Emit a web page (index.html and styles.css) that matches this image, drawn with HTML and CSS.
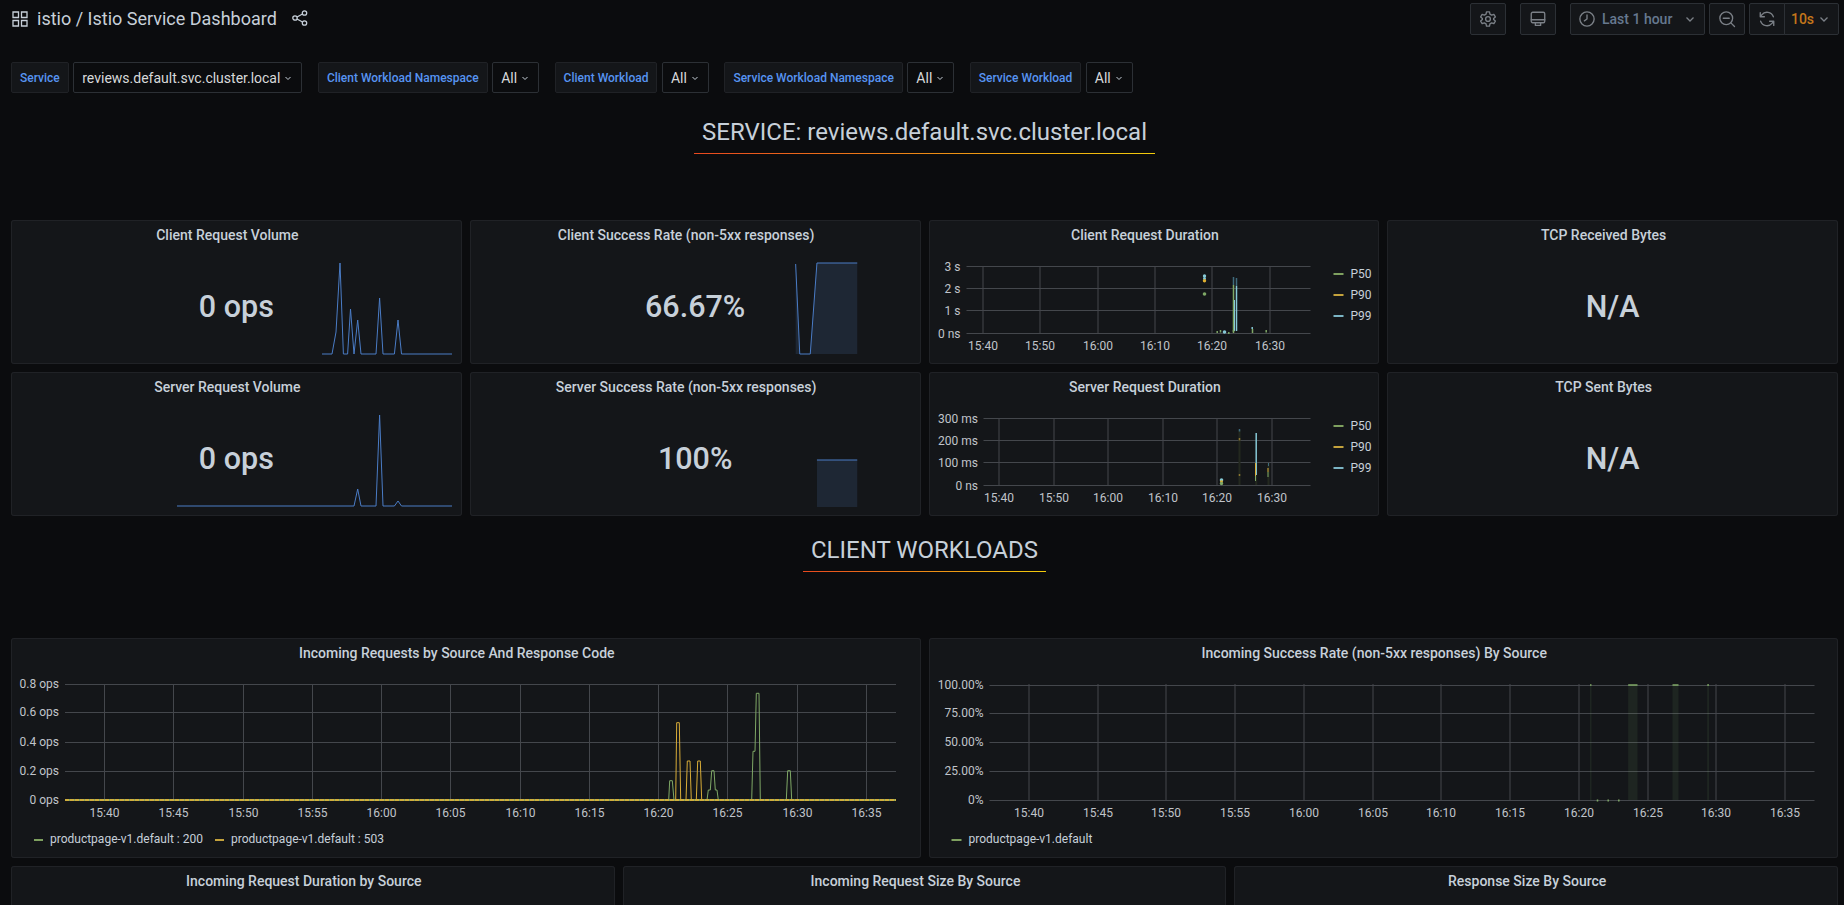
FILE: index.html
```html
<!DOCTYPE html>
<html lang="en">
<head>
<meta charset="utf-8">
<title>Istio Service Dashboard</title>
<link rel="stylesheet" href="styles.css">
</head>
<body>
<header class="topbar">
  <svg class="ico-apps" viewBox="0 0 16 16"><path d="M1 1h5.500v5.500H1zM9.500 1H15v5.500H9.500zM1 9.500h5.500V15H1zM9.500 9.500H15V15H9.500z"/></svg>
  <h1 class="dash-title">istio / Istio Service Dashboard</h1>
  <svg class="ico-share" viewBox="0 0 16 16"><circle cx="3" cy="8" r="2.200"/><circle cx="12.500" cy="3" r="2.200"/><circle cx="12.500" cy="13" r="2.200"/><path d="M5 7l5.500-3M5 9l5.500 3"/></svg>
  <div class="spacer"></div>
  <button class="tbtn tbtn-square tbtn-gap-l">
    <svg class="ico" viewBox="0 0 24 24"><circle cx="12" cy="12" r="3.200"/><path d="M10 2.500h4l.6 3 2.300 1.300 2.900-1 2 3.400-2.300 2a7 7 0 0 1 0 1.600l2.300 2-2 3.400-2.900-1-2.300 1.300-.6 3h-4l-.6-3-2.300-1.300-2.900 1-2-3.400 2.300-2a7 7 0 0 1 0-1.600l-2.300-2 2-3.400 2.900 1 2.300-1.300z"/></svg>
  </button>
  <button class="tbtn tbtn-square tbtn-gap-l">
    <svg class="ico" viewBox="0 0 24 24"><rect x="3" y="3" width="18" height="14" rx="2"/><path d="M3 13h18M8.500 17v3.500h7V17"/></svg>
  </button>
  <button class="tbtn tbtn-time">
    <svg class="ico" viewBox="0 0 24 24"><circle cx="12" cy="12" r="9.500"/><path d="M12 6.500V12l-3.500 2.500"/></svg>
    <span class="time-label">Last 1 hour</span>
    <svg class="chev" viewBox="0 0 12 12"><path d="M2.500 4.500L6 8l3.500-3.500"/></svg>
  </button>
  <button class="tbtn tbtn-square tbtn-gap-s">
    <svg class="ico" viewBox="0 0 24 24"><circle cx="11" cy="11" r="8.500"/><path d="M7 11h8M17.500 17.500l4.500 4.500"/></svg>
  </button>
  <div class="refresh-group">
    <button class="tbtn tbtn-square tbtn-join-l">
      <svg class="ico" viewBox="0 0 24 24"><path d="M20.500 9A9 9 0 0 0 5 6.500L3 9M3.500 15A9 9 0 0 0 19 17.500l2 -2.500M3 3.500V9h5.500M21 20.500V15h-5.500"/></svg>
    </button>
    <button class="tbtn tbtn-join-r">
      <span class="refresh-val">10s</span>
      <svg class="chev" viewBox="0 0 12 12"><path d="M2.500 4.500L6 8l3.500-3.500"/></svg>
    </button>
  </div>
</header>

<section class="filters">
  <div class="f-group"><span class="f-label">Service</span><span class="f-select">reviews.default.svc.cluster.local<svg class="chev-s" viewBox="0 0 10 10"><path d="M2.500 4L5 6.500 7.500 4"/></svg></span></div>
  <div class="f-group"><span class="f-label">Client Workload Namespace</span><span class="f-select">All<svg class="chev-s" viewBox="0 0 10 10"><path d="M2.500 4L5 6.500 7.500 4"/></svg></span></div>
  <div class="f-group"><span class="f-label">Client Workload</span><span class="f-select">All<svg class="chev-s" viewBox="0 0 10 10"><path d="M2.500 4L5 6.500 7.500 4"/></svg></span></div>
  <div class="f-group"><span class="f-label">Service Workload Namespace</span><span class="f-select">All<svg class="chev-s" viewBox="0 0 10 10"><path d="M2.500 4L5 6.500 7.500 4"/></svg></span></div>
  <div class="f-group"><span class="f-label">Service Workload</span><span class="f-select">All<svg class="chev-s" viewBox="0 0 10 10"><path d="M2.500 4L5 6.500 7.500 4"/></svg></span></div>
</section>

<main class="dashboard">
  <div class="text-panel span-24"><h2 class="section-title">SERVICE: reviews.default.svc.cluster.local</h2></div>

  <article class="panel span-6">
    <h3 class="panel-title">Client Request Volume</h3>
    <div class="stat-value">0 ops</div>
    <svg class="chart" viewBox="11 248 450.750 116">
      <path class="spark" d="M322 354H332L336 332L340 263L343.400 354H347.600L350.500 309L354 354L357.700 320L361 354H376L379.600 298L383 354H394.400L398 320L401.500 354H452"/>
    </svg>
  </article>
  <article class="panel span-6">
    <h3 class="panel-title">Client Success Rate (non-5xx responses)</h3>
    <div class="stat-value">66.67%</div>
    <svg class="chart" viewBox="469.750 248 450.750 116">
      <path class="spark-fill" d="M795.400 264L799.500 354H795.400zM810 354L816.700 263H857V354z"/>
      <path class="spark" d="M795.400 264L799.500 354H810L816.700 263H857"/>
    </svg>
  </article>
  <article class="panel span-6">
    <h3 class="panel-title">Client Request Duration</h3>
    <svg class="chart" viewBox="928.500 248 450.750 116">
      <path class="grid" d="M966 266.500H1310M966 288.500H1310M966 310.500H1310M966 333.500H1310M982.500 266V333M1039.500 266V333M1097.500 266V333M1154.500 266V333M1211.500 266V333M1269.500 266V333"/>
      <text class="axis end" x="960" y="270.500">3 s</text>
      <text class="axis end" x="960" y="292.500">2 s</text>
      <text class="axis end" x="960" y="314.500">1 s</text>
      <text class="axis end" x="960" y="337.500">0 ns</text>
      <text class="axis mid" x="982.500" y="350">15:40</text>
      <text class="axis mid" x="1039.500" y="350">15:50</text>
      <text class="axis mid" x="1097.500" y="350">16:00</text>
      <text class="axis mid" x="1154.500" y="350">16:10</text>
      <text class="axis mid" x="1211.500" y="350">16:20</text>
      <text class="axis mid" x="1269.500" y="350">16:30</text>
      <path class="s-blue-soft w2" d="M1233 277V285M1236 278V286"/>
      <path class="s-green w2" d="M1233 285V332"/>
      <path class="s-blue w2" d="M1236 286V331"/>
      <path class="s-blue w1" d="M1234 300V331"/>
      <path class="s-blue w2" d="M1251.700 327V329"/>
      <path class="s-green w2" d="M1252 329V333M1265.700 330V332.500M1216.700 331V333M1220 330V332.500M1228.300 332V334M1233 330V333"/>
      <circle class="f-blue" cx="1224" cy="332" r="1.800"/>
      <circle class="f-blue" cx="1204" cy="276" r="1.700"/><circle class="f-blue" cx="1204" cy="278.500" r="1.500"/>
      <circle class="f-yellow" cx="1204" cy="280.800" r="1.700"/>
      <circle class="f-green" cx="1204" cy="294" r="1.800"/>
      <path class="swatch-g" d="M1333 274H1343"/><text class="legend" x="1350" y="278">P50</text>
      <path class="swatch-y" d="M1333 295H1343"/><text class="legend" x="1350" y="299">P90</text>
      <path class="swatch-b" d="M1333 316H1343"/><text class="legend" x="1350" y="320">P99</text>
    </svg>
  </article>
  <article class="panel span-6">
    <h3 class="panel-title">TCP Received Bytes</h3>
    <div class="stat-value">N/A</div>
  </article>

  <article class="panel span-6">
    <h3 class="panel-title">Server Request Volume</h3>
    <div class="stat-value">0 ops</div>
    <svg class="chart" viewBox="11 400 450.750 116">
      <path class="spark" d="M177 506H354L357.700 489L361 506H376L379.600 415L383 506H394.400L398 501L401.500 506H452"/>
    </svg>
  </article>
  <article class="panel span-6">
    <h3 class="panel-title">Server Success Rate (non-5xx responses)</h3>
    <div class="stat-value">100%</div>
    <svg class="chart" viewBox="469.750 400 450.750 116">
      <rect class="spark-fill" x="816.700" y="460" width="40.300" height="47"/>
      <path class="spark" d="M816.700 460H857"/>
    </svg>
  </article>
  <article class="panel span-6">
    <h3 class="panel-title">Server Request Duration</h3>
    <svg class="chart" viewBox="928.500 400 450.750 116">
      <path class="grid" d="M983 418.500H1310M983 440.500H1310M983 462.500H1310M983 485.500H1310M998.500 418V485M1053.500 418V485M1107.500 418V485M1162.500 418V485M1216.500 418V485M1271.500 418V485"/>
      <text class="axis end" x="977.500" y="422.500">300 ms</text>
      <text class="axis end" x="977.500" y="444.500">200 ms</text>
      <text class="axis end" x="977.500" y="466.500">100 ms</text>
      <text class="axis end" x="977.500" y="489.500">0 ns</text>
      <text class="axis mid" x="998.500" y="502">15:40</text>
      <text class="axis mid" x="1053.500" y="502">15:50</text>
      <text class="axis mid" x="1107.500" y="502">16:00</text>
      <text class="axis mid" x="1162.500" y="502">16:10</text>
      <text class="axis mid" x="1216.500" y="502">16:20</text>
      <text class="axis mid" x="1271.500" y="502">16:30</text>
      <path class="s-band" d="M1239 430V485M1255.700 462V485M1268 463V485"/>
      <path class="s-blue-soft w2" d="M1239 429V431.500"/>
      <path class="s-yellow-soft w2" d="M1239 438V440.500M1239 474V476"/>
      <path class="s-blue w2" d="M1255.700 433V475"/>
      <path class="s-yellow w1" d="M1255 463V476"/>
      <path class="s-green w1" d="M1255 476V481M1267.500 472V477"/>
      <path class="s-yellow w1" d="M1267.500 468V472"/>
      <path class="s-blue-soft w1" d="M1268 463V466"/>
      <circle class="f-blue" cx="1221" cy="480" r="1.800"/>
      <circle class="f-yellow" cx="1221" cy="481.700" r="1.400"/>
      <circle class="f-green" cx="1221" cy="483.500" r="1.700"/>
      <path class="swatch-g" d="M1333 426H1343"/><text class="legend" x="1350" y="430">P50</text>
      <path class="swatch-y" d="M1333 447H1343"/><text class="legend" x="1350" y="451">P90</text>
      <path class="swatch-b" d="M1333 468H1343"/><text class="legend" x="1350" y="472">P99</text>
    </svg>
  </article>
  <article class="panel span-6">
    <h3 class="panel-title">TCP Sent Bytes</h3>
    <div class="stat-value">N/A</div>
  </article>

  <div class="text-panel span-24"><h2 class="section-title">CLIENT WORKLOADS</h2></div>

  <article class="panel span-12">
    <h3 class="panel-title">Incoming Requests by Source And Response Code</h3>
    <svg class="chart" viewBox="11 666 909.500 192">
      <path class="grid" d="M65 684.500H896M65 712.500H896M65 742.500H896M65 771.500H896M104.500 684V800M173.500 684V800M243.500 684V800M312.500 684V800M381.500 684V800M450.500 684V800M520.500 684V800M589.500 684V800M658.500 684V800M727.500 684V800M797.500 684V800M866.500 684V800"/>
      <text class="axis end" x="59" y="688">0.8 ops</text>
      <text class="axis end" x="59" y="716">0.6 ops</text>
      <text class="axis end" x="59" y="746">0.4 ops</text>
      <text class="axis end" x="59" y="775">0.2 ops</text>
      <text class="axis end" x="59" y="804">0 ops</text>
      <text class="axis mid" x="104.500" y="817">15:40</text>
      <text class="axis mid" x="173.500" y="817">15:45</text>
      <text class="axis mid" x="243.500" y="817">15:50</text>
      <text class="axis mid" x="312.500" y="817">15:55</text>
      <text class="axis mid" x="381.500" y="817">16:00</text>
      <text class="axis mid" x="450.500" y="817">16:05</text>
      <text class="axis mid" x="520.500" y="817">16:10</text>
      <text class="axis mid" x="589.500" y="817">16:15</text>
      <text class="axis mid" x="658.500" y="817">16:20</text>
      <text class="axis mid" x="727.500" y="817">16:25</text>
      <text class="axis mid" x="797.500" y="817">16:30</text>
      <text class="axis mid" x="866.500" y="817">16:35</text>
      <path class="s-green w1" d="M668.700 800L669.700 780.700H672.300L674 800M707 800L708.300 790H710.300L711.700 770.700H714L715.300 790H717L718.300 800M751.700 800L753 751.300H755L756.300 693.300H759L760.300 800M786.300 800L787.700 770.700H790.300L791.700 800"/>
      <path class="s-yellow w1" d="M675.700 800L676.700 722.700H679.300L680.700 800M686 800L687.300 761H690L691.300 800M696.300 800L697.700 761H700.300L701.700 800"/>
      <path class="base-g" d="M65 800H896"/>
      <path class="base-y" d="M65 800H896"/>
      <path class="swatch-g" d="M34 840H43"/><text class="legend" x="50" y="843">productpage-v1.default : 200</text>
      <path class="swatch-y" d="M215 840H224"/><text class="legend" x="231" y="843">productpage-v1.default : 503</text>
    </svg>
  </article>
  <article class="panel span-12">
    <h3 class="panel-title">Incoming Success Rate (non-5xx responses) By Source</h3>
    <svg class="chart" viewBox="928.500 666 909.500 192">
      <path class="grid" d="M989 685.500H1814M989 713.500H1814M989 742.500H1814M989 771.500H1814M989 800.500H1814M1028.500 684V800M1097.500 684V800M1165.500 684V800M1234.500 684V800M1303.500 684V800M1372.500 684V800M1440.500 684V800M1509.500 684V800M1578.500 684V800M1647.500 684V800M1715.500 684V800M1784.500 684V800"/>
      <text class="axis end" x="983" y="689">100.00%</text>
      <text class="axis end" x="983" y="717">75.00%</text>
      <text class="axis end" x="983" y="746">50.00%</text>
      <text class="axis end" x="983" y="775">25.00%</text>
      <text class="axis end" x="983" y="804">0%</text>
      <text class="axis mid" x="1028.500" y="817">15:40</text>
      <text class="axis mid" x="1097.500" y="817">15:45</text>
      <text class="axis mid" x="1165.500" y="817">15:50</text>
      <text class="axis mid" x="1234.500" y="817">15:55</text>
      <text class="axis mid" x="1303.500" y="817">16:00</text>
      <text class="axis mid" x="1372.500" y="817">16:05</text>
      <text class="axis mid" x="1440.500" y="817">16:10</text>
      <text class="axis mid" x="1509.500" y="817">16:15</text>
      <text class="axis mid" x="1578.500" y="817">16:20</text>
      <text class="axis mid" x="1647.500" y="817">16:25</text>
      <text class="axis mid" x="1715.500" y="817">16:30</text>
      <text class="axis mid" x="1784.500" y="817">16:35</text>
      <path class="fill-g" d="M1589.500 685h1.500V800h-1.500zM1627.700 685h9.300V800h-9.300zM1672 685h6V800h-6zM1706.700 685h1.800V800h-1.800z"/>
      <path class="s-green w2" d="M1589.500 685h1.500M1627.700 685h9.300M1672 685h6M1706.700 685h1.800M1597 799.500v2M1607.700 799.500v2M1618.300 799.500v2"/>
      <path class="swatch-g" d="M951 840H961"/><text class="legend" x="968" y="843">productpage-v1.default</text>
    </svg>
  </article>

  <article class="panel span-8"><h3 class="panel-title">Incoming Request Duration by Source</h3></article>
  <article class="panel span-8"><h3 class="panel-title">Incoming Request Size By Source</h3></article>
  <article class="panel span-8"><h3 class="panel-title">Response Size By Source</h3></article>
</main>
</body>
</html>
```
FILE: styles.css
```css
* { box-sizing: border-box; }
html, body { margin: 0; height: 905px; overflow: hidden; }
body {
  background: #0b0c0e;
  color: #c7d0d9;
  font-family: Roboto, "Noto Sans", sans-serif;
  font-size: 14px;
}

/* top bar */
.topbar { display: flex; align-items: center; height: 34px; margin-top: 2px; padding: 0 5px 0 12px; }
.ico-apps { width: 16px; height: 16px; fill: none; stroke: #c7d0d9; stroke-width: 1.3; }
.dash-title { margin: 0 0 0 9px; font-size: 18px; font-weight: 400; color: #c7d0d9; position: relative; top: -1px; }
.ico-share { width: 16px; height: 16px; margin-left: 15px; fill: none; stroke: #c7d0d9; stroke-width: 1.3; position: relative; top: -1px; }
.spacer { flex: 1; }
.tbtn {
  display: flex; align-items: center; justify-content: center; height: 32px; padding: 0;
  background: #141619; border: 1px solid #2c3035; border-radius: 2px;
  color: #7b8087; font-family: inherit; font-size: 14px;
}
.tbtn-square { width: 36px; }
.tbtn-gap-l { margin-right: 14px; }
.tbtn-gap-s { margin: 0 4px; }
.tbtn-time { width: 135px; justify-content: flex-start; padding: 0 8px 0 7px; }
.ico { width: 18px; height: 18px; fill: none; stroke: #7b8087; stroke-width: 1.8; stroke-linecap: round; stroke-linejoin: round; }
.time-label { margin-left: 6px; color: #66788f; font-weight: 500; flex: 1; text-align: left; }
.chev { width: 12px; height: 12px; fill: none; stroke: #7b8087; stroke-width: 1.3; }
.refresh-group { display: flex; }
.tbtn-join-l { border-radius: 2px 0 0 2px; }
.tbtn-join-r { width: 55px; margin-left: -1px; border-radius: 0 2px 2px 0; gap: 4px; padding-right: 2px; }
.refresh-val { color: #c4761b; font-weight: 500; }

/* variable filters */
.filters { display: flex; margin-top: 26px; padding-left: 11px; gap: 15.5px; height: 31px; }
.f-group { display: flex; gap: 4.5px; }
.f-label {
  display: flex; align-items: center; padding: 0 8px;
  background: #141619; border: 1px solid #202226; border-radius: 2px;
  color: #5794f2; font-size: 12px; font-weight: 500;
}
.f-select {
  display: flex; align-items: center; padding: 0 8px;
  background: #0b0c0e; border: 1px solid #2c3035; border-radius: 2px;
  color: #d8d9da; font-size: 14px;
}
.chev-s { width: 10px; height: 10px; margin-left: 3px; fill: none; stroke: #c7d0d9; stroke-width: 1; }

/* grid */
.dashboard {
  display: grid;
  grid-template-columns: repeat(24, 1fr);
  grid-template-rows: 106px 144px 144px 106px 220px 144px;
  column-gap: 8px;
  row-gap: 8px;
  margin-top: 13px;
  padding: 0 6px 0 11px;
}
.span-24 { grid-column: span 24; }
.span-12 { grid-column: span 12; }
.span-8 { grid-column: span 8; }
.span-6 { grid-column: span 6; }

.text-panel { display: flex; justify-content: center; align-items: flex-start; padding-top: 10px; }
.section-title {
  margin: 0; padding: 0 8px 5px;
  font-size: 24px; font-weight: 400; line-height: 32px; color: #c7d0d9;
  border-bottom: 1px solid;
  border-image: linear-gradient(90deg, #e8481f, #f2cc0c) 1;
}

.panel {
  position: relative;
  background: #141619;
  box-shadow: inset 0 0 0 1px #202226;
  border-radius: 3px;
  min-width: 0;
}
.panel-title {
  margin: 0; height: 28px; padding: 0 18px 0 0;
  font-size: 14px; font-weight: 500; line-height: 30px; text-align: center; color: #c7d0d9;
}
.stat-value {
  position: absolute; left: 0; right: 0; top: 69px;
  font-size: 30.5px; font-weight: 500; line-height: 36px; text-align: center; color: #c7d0d9;
}
.chart { display: block; width: 100%; overflow: visible; }
.span-6 .chart { height: 116px; }
.span-12 .chart { height: 192px; }

/* chart marks */
.grid { fill: none; stroke: #44474c; stroke-width: 1; }
.axis { fill: #c0c4ca; font-size: 12px; }
.end { text-anchor: end; }
.mid { text-anchor: middle; }
.legend { fill: #c7d0d9; font-size: 12px; }
.spark { fill: none; stroke: #4a7cc6; stroke-width: 1; }
.spark-fill { fill: #1e2734; stroke: none; }
.swatch-g, .swatch-y, .swatch-b { fill: none; stroke-width: 2; }
.swatch-g { stroke: #7ea05f; }
.swatch-y { stroke: #c4a23c; }
.swatch-b { stroke: #7bb4c4; }
.s-green, .s-yellow, .s-blue, .s-blue-soft, .s-yellow-soft, .s-band { fill: none; }
.s-green { stroke: #7fa866; }
.s-yellow { stroke: #d8ac38; }
.s-blue { stroke: #86c9d6; }
.s-blue-soft { stroke: #3f6a7c; }
.s-yellow-soft { stroke: #8a7430; }
.s-band { stroke: #23281f; stroke-width: 2; }
.w1 { stroke-width: 1; }
.w2 { stroke-width: 1.5; }
.f-green { fill: #7fa866; }
.f-yellow { fill: #e0b030; }
.f-blue { fill: #86c9d6; }
.fill-g { fill: #7eb26d; fill-opacity: .1; stroke: none; }
.base-g { stroke: #7fa866; stroke-width: 2; fill: none; }
.base-y { stroke: #d0ad3c; stroke-width: 2; fill: none; stroke-dasharray: 4 1; }
```
